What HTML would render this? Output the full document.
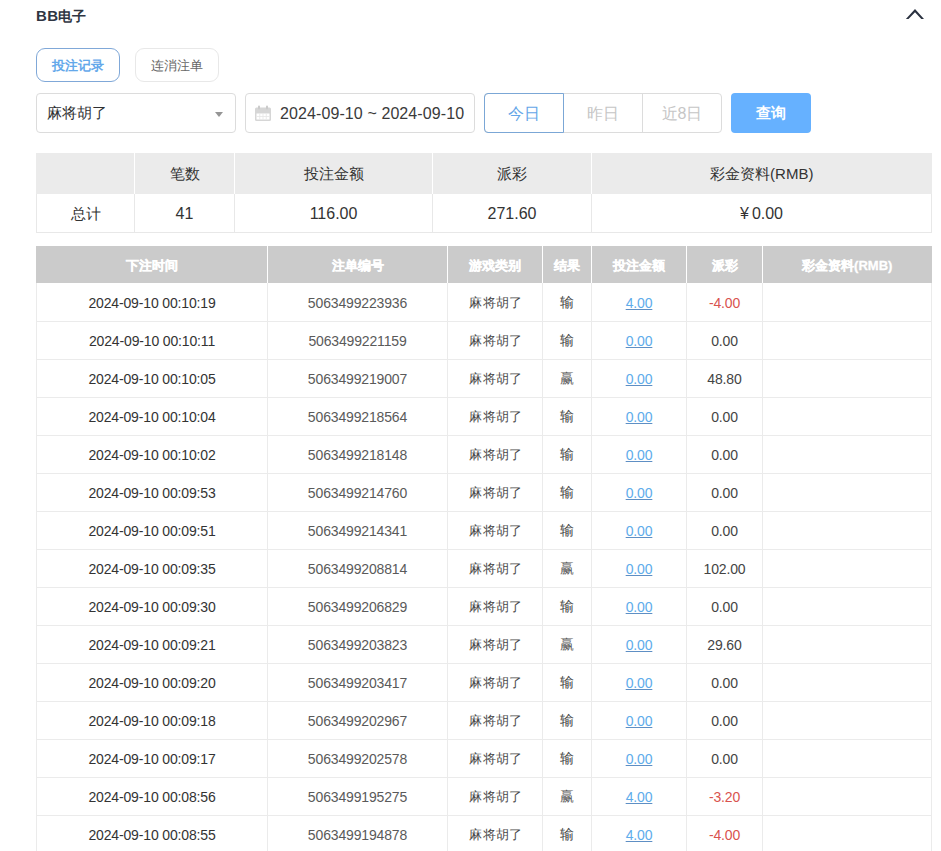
<!DOCTYPE html>
<html><head><meta charset="utf-8">
<style>
*{box-sizing:border-box;margin:0;padding:0}
html,body{width:941px;height:851px;overflow:hidden;background:#fff}
body{font-family:"Liberation Sans",sans-serif;position:relative;color:#303133}
.abs{position:absolute}
.title{left:36px;top:7px;font-size:14px;font-weight:bold;color:#2f3542;line-height:18px}
.chev{left:906px;top:9px;width:18px;height:11px}
.tab{top:48px;height:34px;border-radius:9px;font-size:13px;line-height:33px;text-align:center;border:1px solid #e8e8e8;color:#666}
.tab1{left:36px;width:84px;border-color:#80a8d8;color:#64a8ea;font-weight:bold}
.tab2{left:135px;width:84px}
.sel{left:36px;top:93px;width:200px;height:40px;border:1px solid #dcdcdc;border-radius:4px}
.sel span{position:absolute;left:10px;top:0;line-height:38px;font-size:15px;color:#303133}
.tri{position:absolute;left:178px;top:18px;width:0;height:0;border-left:4.5px solid transparent;border-right:4.5px solid transparent;border-top:5px solid #959595}
.date{left:245px;top:93px;width:230px;height:40px;border:1px solid #dcdcdc;border-radius:4px}
.date span{position:absolute;left:34px;top:0;line-height:38px;font-size:16px;color:#3a3a3a;white-space:nowrap;padding-top:1px;letter-spacing:0.1px}
.cal{position:absolute;left:9px;top:11px}
.grp{left:484px;top:93px;width:238px;height:40px;border:1px solid #dcdcdc;border-radius:4px;display:flex}
.grp div{flex:1;text-align:center;line-height:38px;font-size:16px;color:#c6c6c6;padding-top:1px}
.grp div+div{border-left:1px solid #dcdcdc}
.grp .on{color:#64a6e8}
.onbox{left:484px;top:93px;width:80px;height:40px;border:1px solid #7ba7d6;border-radius:4px 0 0 4px}
.qry{left:731px;top:93px;width:80px;height:40px;border-radius:4px;background:#66b1ff;color:#fff;font-size:15px;line-height:40px;text-align:center;font-weight:bold}
table{border-collapse:collapse;table-layout:fixed;position:absolute;left:36px;width:895px}
td,th{text-align:center;white-space:nowrap;overflow:hidden}
.sum{top:153px}
.sum th{height:41px;background:#ebebeb;font-weight:normal;font-size:15px;color:#333;border-left:1px solid #fff;padding-top:2px}
.sum th:first-child{border-left:1px solid #ebebeb}
.sum td{height:38px;font-size:15px;color:#333;border:1px solid #e8e8e8;border-top:0;padding-top:3px}
.sum td.n{font-size:16px}
.main{top:246px}
.main th{height:37px;background:#cbcbcb;color:#fff;font-size:13px;font-weight:bold;border-left:1px solid #fff;padding-top:2px;-webkit-text-stroke:0.3px #fff}
.main th:first-child{border-left:1px solid #cbcbcb}
.main td{height:38px;font-size:14px;color:#333;border:1px solid #ebebeb;border-top:0;padding-top:2px;letter-spacing:-0.15px}
.main td.g{color:#5a5a5a}
.main td.r{color:#444;font-size:13.5px}
.main td.w{color:#5a5a5a}
.main td.zh{font-size:13px;letter-spacing:0.3px;padding-top:2px;padding-left:2px;color:#484848}
.main a{color:#5eaceb;text-decoration:underline;text-decoration-color:#5e8fc4}
.main td.p{color:#444}
.red{color:#d9534f !important}
</style></head><body>
<div class="abs title"><span style="font-size:15px;letter-spacing:0.3px">BB</span>电子</div>
<svg class="abs" style="left:880px;top:0" width="61" height="40" viewBox="0 0 61 40"><polygon points="25.9,19.1 35,9.1 44,19.1 41.3,19.1 35,12.3 28.5,19.1" fill="#2b3240"/></svg>
<div class="abs tab tab1">投注记录</div>
<div class="abs tab tab2">连消注单</div>
<div class="abs sel"><span>麻将胡了</span><i class="tri"></i></div>
<div class="abs date"><svg class="cal" width="16" height="16" viewBox="0 0 16 16"><rect x="0" y="2.5" width="16" height="13.5" rx="1.5" fill="#d6d6d6"/><rect x="1.5" y="8.5" width="13" height="6" fill="#fff"/><path d="M4.75 8.5V14.5M8 8.5V14.5M11.25 8.5V14.5M1.5 11.5H14.5" stroke="#e6e6e6" stroke-width="0.8"/><rect x="3" y="0.5" width="2" height="4" rx="1" fill="#cacaca"/><rect x="11" y="0.5" width="2" height="4" rx="1" fill="#cacaca"/></svg><span>2024-09-10 ~ 2024-09-10</span></div>
<div class="abs grp"><div class="on">今日</div><div>昨日</div><div>近8日</div></div>
<div class="abs onbox"></div>
<div class="abs qry">查询</div>
<table class="sum">
<colgroup><col style="width:98px"><col style="width:100px"><col style="width:198px"><col style="width:159px"><col style="width:340px"></colgroup>
<tr><th></th><th>笔数</th><th>投注金额</th><th>派彩</th><th>彩金资料(RMB)</th></tr>
<tr><td>总计</td><td class="n">41</td><td class="n">116.00</td><td class="n">271.60</td><td class="n"><span style="margin-right:3px">¥</span>0.00</td></tr>
</table>
<table class="main">
<colgroup><col style="width:231px"><col style="width:180px"><col style="width:95px"><col style="width:49px"><col style="width:95px"><col style="width:76px"><col style="width:169px"></colgroup>
<tr><th>下注时间</th><th>注单编号</th><th>游戏类别</th><th>结果</th><th>投注金额</th><th>派彩</th><th>彩金资料(RMB)</th></tr>
<tr><td>2024-09-10 00:10:19</td><td class="g">5063499223936</td><td class="g zh">麻将胡了</td><td class="r">输</td><td><a>4.00</a></td><td class="red">-4.00</td><td></td></tr>
<tr><td>2024-09-10 00:10:11</td><td class="g">5063499221159</td><td class="g zh">麻将胡了</td><td class="r">输</td><td><a>0.00</a></td><td class="p">0.00</td><td></td></tr>
<tr><td>2024-09-10 00:10:05</td><td class="g">5063499219007</td><td class="g zh">麻将胡了</td><td class="r w">赢</td><td><a>0.00</a></td><td class="p">48.80</td><td></td></tr>
<tr><td>2024-09-10 00:10:04</td><td class="g">5063499218564</td><td class="g zh">麻将胡了</td><td class="r">输</td><td><a>0.00</a></td><td class="p">0.00</td><td></td></tr>
<tr><td>2024-09-10 00:10:02</td><td class="g">5063499218148</td><td class="g zh">麻将胡了</td><td class="r">输</td><td><a>0.00</a></td><td class="p">0.00</td><td></td></tr>
<tr><td>2024-09-10 00:09:53</td><td class="g">5063499214760</td><td class="g zh">麻将胡了</td><td class="r">输</td><td><a>0.00</a></td><td class="p">0.00</td><td></td></tr>
<tr><td>2024-09-10 00:09:51</td><td class="g">5063499214341</td><td class="g zh">麻将胡了</td><td class="r">输</td><td><a>0.00</a></td><td class="p">0.00</td><td></td></tr>
<tr><td>2024-09-10 00:09:35</td><td class="g">5063499208814</td><td class="g zh">麻将胡了</td><td class="r w">赢</td><td><a>0.00</a></td><td class="p">102.00</td><td></td></tr>
<tr><td>2024-09-10 00:09:30</td><td class="g">5063499206829</td><td class="g zh">麻将胡了</td><td class="r">输</td><td><a>0.00</a></td><td class="p">0.00</td><td></td></tr>
<tr><td>2024-09-10 00:09:21</td><td class="g">5063499203823</td><td class="g zh">麻将胡了</td><td class="r w">赢</td><td><a>0.00</a></td><td class="p">29.60</td><td></td></tr>
<tr><td>2024-09-10 00:09:20</td><td class="g">5063499203417</td><td class="g zh">麻将胡了</td><td class="r">输</td><td><a>0.00</a></td><td class="p">0.00</td><td></td></tr>
<tr><td>2024-09-10 00:09:18</td><td class="g">5063499202967</td><td class="g zh">麻将胡了</td><td class="r">输</td><td><a>0.00</a></td><td class="p">0.00</td><td></td></tr>
<tr><td>2024-09-10 00:09:17</td><td class="g">5063499202578</td><td class="g zh">麻将胡了</td><td class="r">输</td><td><a>0.00</a></td><td class="p">0.00</td><td></td></tr>
<tr><td>2024-09-10 00:08:56</td><td class="g">5063499195275</td><td class="g zh">麻将胡了</td><td class="r w">赢</td><td><a>4.00</a></td><td class="red">-3.20</td><td></td></tr>
<tr><td>2024-09-10 00:08:55</td><td class="g">5063499194878</td><td class="g zh">麻将胡了</td><td class="r">输</td><td><a>4.00</a></td><td class="red">-4.00</td><td></td></tr>
</table>
</body></html>
